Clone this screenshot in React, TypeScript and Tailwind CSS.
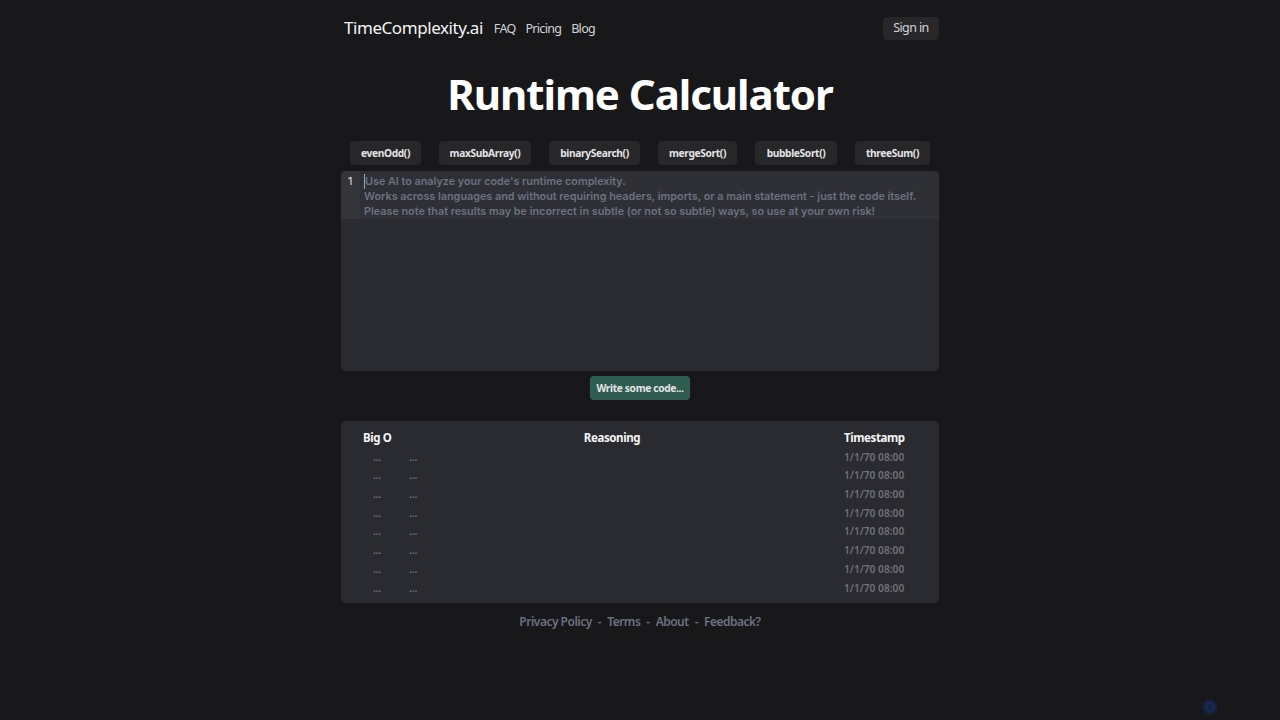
const examples = [
  { name: "evenOdd()", width: "w-[71px]" },
  { name: "maxSubArray()", width: "w-[92px]" },
  { name: "binarySearch()", width: "w-[91px]" },
  { name: "mergeSort()", width: "w-[79px]" },
  { name: "bubbleSort()", width: "w-[82px]" },
  { name: "threeSum()", width: "w-[75px]" },
]
const rows = [0, 1, 2, 3, 4, 5, 6, 7]

export default function App() {
  return (
    <div className="min-h-[720px] bg-[#18181b] font-['Noto_Sans',sans-serif] overflow-hidden relative">
      <div className="w-[598px] mx-auto">
        <header className="h-[56px] flex items-center justify-between">
          <div className="flex items-center pl-[3px]">
            <span className="-mt-[1px] text-[17px] tracking-[-0.44px] text-[#f4f4f5]">TimeComplexity.ai</span>
            <nav className="flex gap-[10px] ml-[11px] mt-[2px] text-[12.5px] tracking-[-0.7px] text-[#d4d4d8]">
              <a>FAQ</a>
              <a>Pricing</a>
              <a>Blog</a>
            </nav>
          </div>
          <button className="h-[23px] w-[56px] rounded bg-[#27272a] text-[12.5px] tracking-[-0.6px] text-[#d4d4d8]">Sign in</button>
        </header>

        <h1 className="mt-[9px] h-[58px] text-center text-[42px] tracking-[-1.05px] leading-[58px] font-bold text-white">Runtime Calculator</h1>

        <div className="mt-[18px] flex justify-center gap-[18px]">
          {examples.map((item) => (
            <button key={item.name} className={`${item.width} h-[24px] pt-[1px] rounded bg-[#27272a] text-[10.2px] tracking-[-0.35px] font-bold text-[#e4e4e7]`}>
              {item.name}
            </button>
          ))}
        </div>

        <div className="mt-[6px] h-[200px] rounded-[5px] bg-[#2a2b30] overflow-hidden">
          <div className="flex h-[48px] bg-[#2e3036] font-['Inter',sans-serif] text-[10.8px] leading-[15px] font-semibold">
            <div className="w-[19px] bg-[#33353b] pl-[7px] pt-[3px] font-normal text-[#e4e4e7]">1</div>
            <div className="pl-[4px] pt-[3px] text-[#6b7280] whitespace-nowrap">
              <div className="border-l border-[#9ca3af]">Use AI to analyze your code's runtime complexity.</div>
              <div>Works across languages and without requiring headers, imports, or a main statement - just the code itself.</div>
              <div>Please note that results may be incorrect in subtle (or not so subtle) ways, so use at your own risk!</div>
            </div>
          </div>
        </div>

        <div className="mt-[5px] flex justify-center">
          <button className="h-[24px] w-[100px] pt-[1px] rounded bg-[#2f5d50] text-[10.2px] tracking-[-0.35px] font-bold text-[#e4e4e7]">Write some code...</button>
        </div>

        <div className="mt-[21px] h-[182px] rounded-[5px] bg-[#2a2b30] pt-[8px]">
          <div className="flex h-[17px] text-[11.5px] tracking-[-0.4px] font-bold text-[#f4f4f5] leading-[17px]">
            <div className="w-[60px] pl-[22px] whitespace-nowrap">Big O</div>
            <div className="flex-1 text-center pr-[21px]">Reasoning</div>
            <div className="w-[95px]">Timestamp</div>
          </div>
          <div className="mt-[2px]">
            {rows.map((i) => (
              <div key={i} className="flex h-[18.7px] items-center text-[10.2px] font-semibold text-[#71717a]">
                <div className="w-[68px] pl-[32px]">...</div>
                <div className="flex-1">...</div>
                <div className="w-[95px]">1/1/70 08:00</div>
              </div>
            ))}
          </div>
        </div>

        <footer className="mt-[10px] flex justify-center gap-[6px] text-[12px] tracking-[-0.5px] font-semibold text-[#6b7280]">
          <a>Privacy Policy</a>
          <span>-</span>
          <a>Terms</a>
          <span>-</span>
          <a>About</a>
          <span>-</span>
          <a>Feedback?</a>
        </footer>
      </div>

      <svg className="absolute left-[1202px] top-[699px]" width="16" height="16" viewBox="0 0 16 16" fill="none">
        <circle cx="8" cy="8" r="7.5" fill="#15213f" />
        <circle cx="8" cy="8" r="4" stroke="#1b2f63" strokeWidth="1.3" />
      </svg>
    </div>
  )
}
